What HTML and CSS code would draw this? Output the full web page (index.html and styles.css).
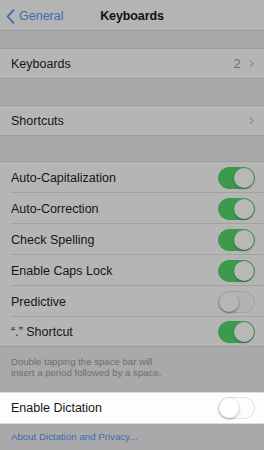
FILE: index.html
```html
<!DOCTYPE html>
<html>
<head>
<meta charset="utf-8">
<link rel="stylesheet" href="styles.css">
</head>
<body>
<div class="screen">
  <div class="nav">
    <div class="back">
      <svg class="back-chev" width="9" height="15" viewBox="0 0 9 15"><path d="M7.5 1.2 L1.6 7.5 L7.5 13.8" fill="none" stroke="#3a6db0" stroke-width="1.8" stroke-linecap="round" stroke-linejoin="round"/></svg>
      <span>General</span>
    </div>
    <div class="title">Keyboards</div>
  </div>
  <div class="gap g1"></div>
  <div class="group">
    <div class="row"><span class="label">Keyboards</span><span class="detail">2</span><span class="chev">›</span></div>
  </div>
  <div class="gap g2"></div>
  <div class="group">
    <div class="row"><span class="label">Shortcuts</span><span class="chev">›</span></div>
  </div>
  <div class="gap g3"></div>
  <div class="group">
    <div class="row sep"><span class="label">Auto-Capitalization</span><span class="toggle on"><i></i></span></div>
    <div class="row sep"><span class="label">Auto-Correction</span><span class="toggle on"><i></i></span></div>
    <div class="row sep"><span class="label">Check Spelling</span><span class="toggle on"><i></i></span></div>
    <div class="row sep"><span class="label">Enable Caps Lock</span><span class="toggle on"><i></i></span></div>
    <div class="row sep"><span class="label">Predictive</span><span class="toggle"><i></i></span></div>
    <div class="row"><span class="label">“.” Shortcut</span><span class="toggle on"><i></i></span></div>
  </div>
  <div class="footer">Double tapping the space bar will<br>insert a period followed by a space.</div>
  <div class="group white">
    <div class="row"><span class="label">Enable Dictation</span><span class="toggle white-t"><i></i></span></div>
  </div>
  <div class="link">About Dictation and Privacy...</div>
</div>
</body>
</html>
```
FILE: styles.css
```css
html, body {
  margin: 0;
  padding: 0;
  background: #a9a9ab;
}
.screen {
  width: 264px;
  height: 450px;
  overflow: hidden;
  background: #a9a9ab;
  font-family: "Liberation Sans", Arial, sans-serif;
  color: #161616;
}
.nav {
  height: 31px;
  box-sizing: border-box;
  border-bottom: 1px solid #999;
  background: #b4b4b5;
  display: flex;
  align-items: center;
  padding-top: 2px;
  position: relative;
}
.back {
  display: flex;
  align-items: center;
  gap: 4px;
  padding-left: 6px;
  color: #3a6db0;
  font-size: 12.5px;
}
.title {
  position: absolute;
  left: 0;
  right: 0;
  top: 9px;
  text-align: center;
  font-size: 12.5px;
  font-weight: bold;
  color: #111;
  pointer-events: none;
  letter-spacing: -0.1px;
}
.gap { background: #a9a9ab; }
.g1 { height: 17px; }
.g2 { height: 26px; }
.g3 { height: 25px; }
.group {
  background: #b5b5b5;
  border-top: 1px solid #9e9e9e;
  border-bottom: 1px solid #9e9e9e;
}
.row {
  height: 29px;
  display: flex;
  align-items: center;
  padding: 0 9px 0 11px;
  position: relative;
  font-size: 12.5px;
}
.row.sep::after {
  content: "";
  position: absolute;
  left: 11px;
  right: 0;
  bottom: 0;
  height: 1px;
  background: #a2a2a2;
}
.row.sep { height: 31px; box-sizing: border-box; }
.label { flex: 1; }
.detail { color: #6c6c6c; margin-right: 8px; }
.chev {
  color: #8e8e8e;
  font-size: 16px;
  line-height: 1;
  margin-top: -2px;
  margin-right: 1px;
}
.toggle {
  width: 37px;
  height: 22px;
  border-radius: 11px;
  box-sizing: border-box;
  border: 1px solid #a2a2a2;
  background: #b3b3b3;
  position: relative;
}
.toggle i {
  position: absolute;
  top: 0;
  left: 0;
  width: 20px;
  height: 20px;
  border-radius: 50%;
  background: #b6b6b6;
  box-shadow: 0 1px 2px rgba(0,0,0,0.45);
}
.toggle.on {
  background: #3c9a4b;
  border-color: #3c9a4b;
}
.toggle.on i {
  left: auto;
  right: 0;
  background: #b8b8b8;
  box-shadow: 0 1px 2px rgba(0,0,0,0.35);
}
.footer {
  height: 45px;
  box-sizing: border-box;
  padding: 9px 11px 0;
  font-size: 9.6px;
  line-height: 11px;
  color: #6e6e6e;
}
.group.white {
  background: #fdfdfd;
  border-color: #dcdcdc;
}
.group.white .row { height: 30px; }
.toggle.white-t {
  background: #fdfdfd;
  border-color: #e2e2e2;
}
.toggle.white-t i {
  background: #fff;
  box-shadow: 0 1px 3px rgba(0,0,0,0.35);
}
.link {
  padding: 7px 11px 0;
  font-size: 9.7px;
  color: #3a6db0;
}
```
